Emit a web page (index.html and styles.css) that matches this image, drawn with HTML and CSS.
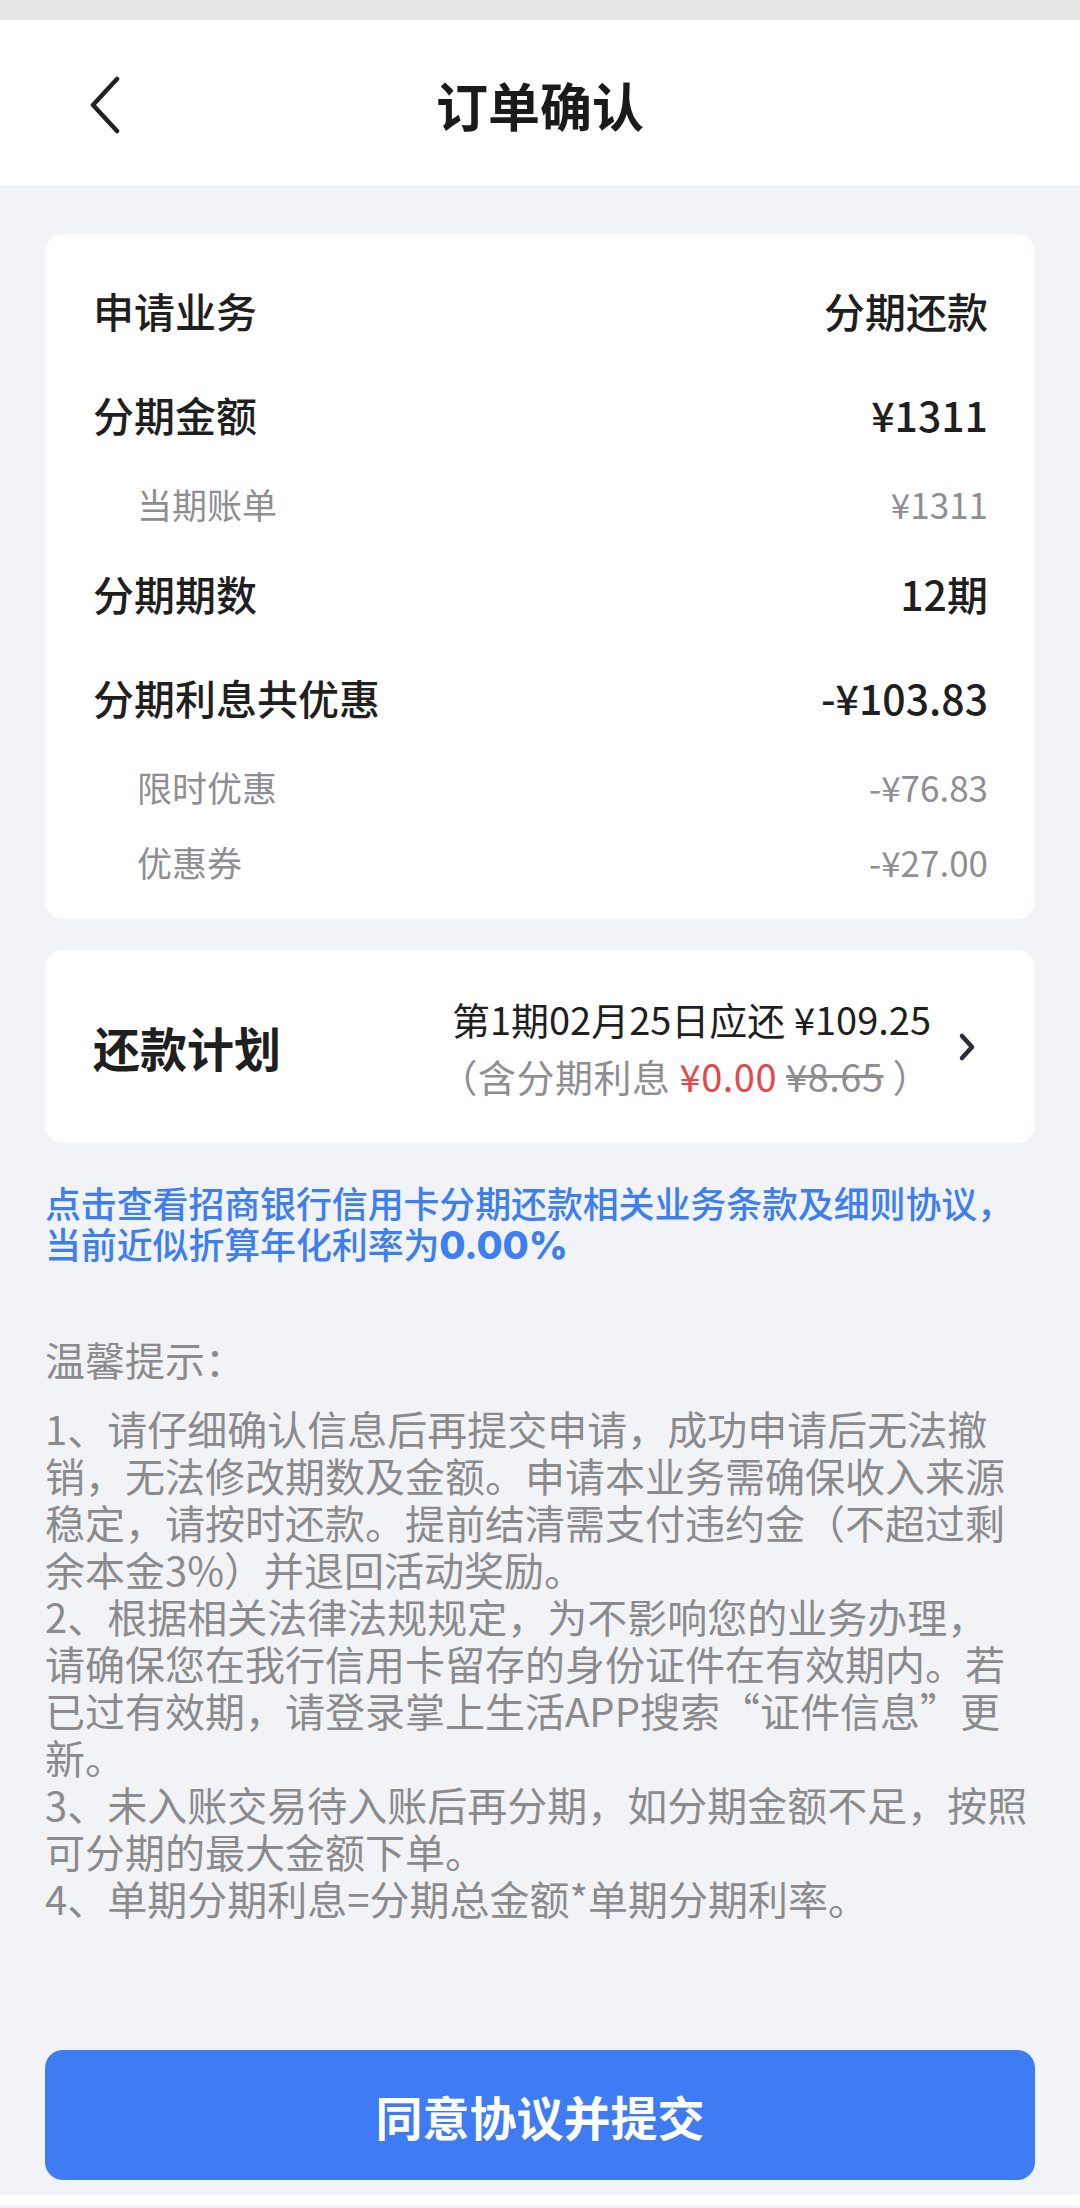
FILE: index.html
```html
<!DOCTYPE html>
<html lang="zh-CN">
<head>
    <meta charset="UTF-8">
    <title>订单确认</title>
    <link rel="stylesheet" href="styles.css">
</head>
<body>
<div class="status"></div>
<div class="nav">
    <svg class="back" width="36" height="58" viewBox="0 0 36 58">
        <path d="M29 3 L5 29 L29 55" fill="none" stroke="#222" stroke-width="4.5" stroke-linecap="round" stroke-linejoin="round"/>
    </svg>
    <div class="nav-title">订单确认</div>
</div>

<div class="main">
    <div class="card info">
        <div class="row"><span>申请业务</span><span>分期还款</span></div>
        <div class="row"><span>分期金额</span><span>¥1311</span></div>
        <div class="row sub"><span>当期账单</span><span>¥1311</span></div>
        <div class="row"><span>分期期数</span><span>12期</span></div>
        <div class="row"><span>分期利息共优惠</span><span>-¥103.83</span></div>
        <div class="row sub"><span>限时优惠</span><span>-¥76.83</span></div>
        <div class="row sub"><span>优惠券</span><span>-¥27.00</span></div>
    </div>

    <div class="card plan">
        <div class="plan-title">还款计划</div>
        <div class="plan-info">
            <div class="plan-line">第1期02月25日应还 ¥109.25</div>
            <div class="plan-line gray">（含分期利息 <span class="red">¥0.00</span> <s>¥8.65</s> ）</div>
        </div>
        <svg class="arrow" width="20" height="30" viewBox="0 0 20 30">
            <path d="M5 4 L15 15 L5 26" fill="none" stroke="#2b2d3b" stroke-width="4.5" stroke-linecap="round" stroke-linejoin="round"/>
        </svg>
    </div>

    <p class="link">点击查看招商银行信用卡分期还款相关业务条款及细则协议，<br>当前近似折算年化利率为<b>0.00%</b></p>

    <div class="tips">
        <p class="tips-head">温馨提示：</p>
        <p>1、请仔细确认信息后再提交申请，成功申请后无法撤<br>销，无法修改期数及金额。申请本业务需确保收入来源<br>稳定，请按时还款。提前结清需支付违约金（不超过剩<br>余本金3%）并退回活动奖励。</p>
        <p>2、根据相关法律法规规定，为不影响您的业务办理，<br>请确保您在我行信用卡留存的身份证件在有效期内。若<br>已过有效期，请登录掌上生活APP搜索“证件信息”更<br>新。</p>
        <p>3、未入账交易待入账后再分期，如分期金额不足，按照<br>可分期的最大金额下单。</p>
        <p>4、单期分期利息=分期总金额*单期分期利率。</p>
    </div>

    <div class="submit">同意协议并提交</div>
</div>
<div class="bottom"></div>
</body>
</html>
```

FILE: styles.css
```css
* {
    margin: 0;
    padding: 0;
    box-sizing: border-box;
}

body {
    background: #f2f3f7;
    font-family: "Noto Sans CJK SC", "Noto Sans", sans-serif;
    color: #1f1f1f;
}

.status {
    height: 20px;
    background: #e6e6e6;
}

.nav {
    position: relative;
    height: 167px;
    background: #fff;
    border-bottom: 1px solid #e6e7eb;
    display: flex;
    align-items: center;
    justify-content: center;
}

.back {
    position: absolute;
    left: 88px;
    top: 56px;
}

.nav-title {
    font-size: 52px;
    font-weight: bold;
    color: #1a1a1a;
    margin-top: 2px;
}

.main {
    padding: 47px 45px 15px;
}

.card {
    background: #fff;
    border-radius: 18px;
}

/* 订单信息 */
.info {
    padding: 40px 47px 30px 48px;
}

.row {
    height: 72px;
    display: flex;
    align-items: center;
    justify-content: space-between;
    font-size: 41px;
    font-weight: 500;
}

.row + .row {
    margin-top: 32px;
}

.row.sub {
    height: 56px;
    font-size: 35px;
    font-weight: normal;
    color: #8e8e93;
    padding-left: 44px;
}

.row + .row.sub {
    margin-top: 25px;
}

.row.sub + .row {
    margin-top: 26px;
}

.row.sub + .row.sub {
    margin-top: 19px;
}

/* 还款计划 */
.plan {
    margin-top: 31px;
    height: 193px;
    display: flex;
    align-items: center;
    padding: 0 58px 0 48px;
}

.plan-title {
    font-size: 47px;
    font-weight: bold;
    flex: 1;
}

.plan-info {
    text-align: right;
}

.plan-line {
    font-size: 38px;
    line-height: 57px;
    white-space: nowrap;
}

.plan-line.gray {
    color: #8e8e93;
    letter-spacing: 0.5px;
}

.red {
    color: #e5474d;
}

.plan-line s {
    color: #8e8e93;
}

.arrow {
    margin-left: 26px;
}

.link {
    margin-top: 39px;
    font-size: 36px;
    line-height: 41px;
    color: #3d7ef0;
    font-weight: 500;
    letter-spacing: -0.15px;
}

.link b {
    font-family: "Inter", "Liberation Sans", sans-serif;
    font-weight: 800;
    font-size: 38px;
}

.tips {
    margin-top: 70px;
    padding-right: 10px;
    color: #8b8b8e;
    font-size: 40px;
    line-height: 47px;
    white-space: nowrap;
}

.tips-head {
    margin-bottom: 22px;
}

.submit {
    margin-top: 128px;
    height: 130px;
    border-radius: 18px;
    background: #3f7cf4;
    color: #fff;
    font-size: 47px;
    font-weight: bold;
    display: flex;
    align-items: center;
    justify-content: center;
}

.bottom {
    height: 10px;
    background: #fff;
}
```
